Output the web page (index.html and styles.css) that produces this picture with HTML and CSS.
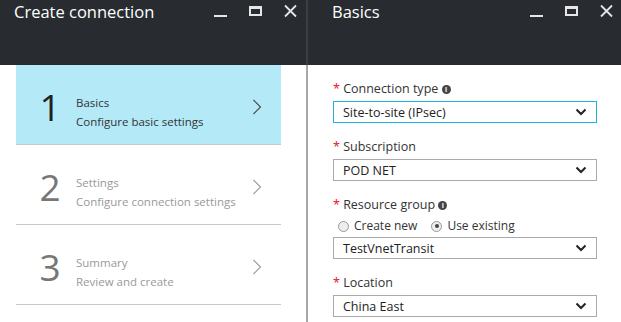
FILE: index.html
```html
<!doctype html>
<html lang="en">
<head>
	<meta charset="UTF-8">
	<title>Create connection</title>
	<link rel="stylesheet" href="styles.css">
</head>
<body>
	<div class="blade left">
		<div class="head">
			<h1>Create connection</h1>
			<div class="ctrls">
				<svg width="13" height="14" viewBox="0 0 13 14"><rect x="0" y="11" width="13" height="2" fill="#e6e6e6"/></svg>
				<svg width="13" height="14" viewBox="0 0 13 14"><path d="M0 2h13v10H0z M2 5v5h9V5z" fill="#e6e6e6" fill-rule="evenodd"/></svg>
				<svg width="13" height="14" viewBox="0 0 13 14"><path d="M1 1.5l11 11M12 1.5l-11 11" stroke="#e6e6e6" stroke-width="1.8"/></svg>
			</div>
		</div>
		<ul class="steps">
			<li class="step on">
				<span class="num">1</span>
				<div class="txt"><p>Basics</p><p>Configure basic settings</p></div>
				<svg class="arr" width="10" height="16" viewBox="0 0 10 16"><path d="M1.5 1l7 7-7 7" fill="none" stroke="#444" stroke-width="1.1"/></svg>
			</li>
			<li class="step">
				<span class="num">2</span>
				<div class="txt"><p>Settings</p><p>Configure connection settings</p></div>
				<svg class="arr" width="10" height="16" viewBox="0 0 10 16"><path d="M1.5 1l7 7-7 7" fill="none" stroke="#999" stroke-width="1.1"/></svg>
			</li>
			<li class="step">
				<span class="num">3</span>
				<div class="txt"><p>Summary</p><p>Review and create</p></div>
				<svg class="arr" width="10" height="16" viewBox="0 0 10 16"><path d="M1.5 1l7 7-7 7" fill="none" stroke="#999" stroke-width="1.1"/></svg>
			</li>
		</ul>
	</div>
	<div class="split"></div>
	<div class="blade right">
		<div class="head">
			<h1>Basics</h1>
			<div class="ctrls">
				<svg width="13" height="14" viewBox="0 0 13 14"><rect x="0" y="11" width="13" height="2" fill="#e6e6e6"/></svg>
				<svg width="13" height="14" viewBox="0 0 13 14"><path d="M0 2h13v10H0z M2 5v5h9V5z" fill="#e6e6e6" fill-rule="evenodd"/></svg>
				<svg width="13" height="14" viewBox="0 0 13 14"><path d="M1 1.5l11 11M12 1.5l-11 11" stroke="#e6e6e6" stroke-width="1.8"/></svg>
			</div>
		</div>
		<div class="form">
			<div class="field">
				<label><b>*</b> Connection type <i class="info">i</i></label>
				<div class="sel focus"><span>Site-to-site (IPsec)</span><svg width="12" height="8" viewBox="0 0 12 8"><path d="M1.5 1.5l4.5 4.5 4.5-4.5" fill="none" stroke="#222" stroke-width="2"/></svg></div>
			</div>
			<div class="field">
				<label><b>*</b> Subscription</label>
				<div class="sel"><span>POD NET</span><svg width="12" height="8" viewBox="0 0 12 8"><path d="M1.5 1.5l4.5 4.5 4.5-4.5" fill="none" stroke="#222" stroke-width="2"/></svg></div>
			</div>
			<div class="field">
				<label><b>*</b> Resource group <i class="info">i</i></label>
				<div class="radios">
					<span class="radio"><i></i>Create new</span>
					<span class="radio checked"><i></i>Use existing</span>
				</div>
				<div class="sel"><span>TestVnetTransit</span><svg width="12" height="8" viewBox="0 0 12 8"><path d="M1.5 1.5l4.5 4.5 4.5-4.5" fill="none" stroke="#222" stroke-width="2"/></svg></div>
			</div>
			<div class="field">
				<label><b>*</b> Location</label>
				<div class="sel"><span>China East</span><svg width="12" height="8" viewBox="0 0 12 8"><path d="M1.5 1.5l4.5 4.5 4.5-4.5" fill="none" stroke="#222" stroke-width="2"/></svg></div>
			</div>
		</div>
	</div>
</body>
</html>
```

FILE: styles.css
```css
html, body {
	margin: 0;
	padding: 0;
	height: 100%;
	overflow: hidden;
	font-family: "Open Sans", "Noto Sans", sans-serif;
	background: #fff;
}
body {
	display: flex;
}
p, h1, ul, li {
	margin: 0;
	padding: 0;
}
ul {
	list-style: none;
}
.blade {
	display: flex;
	flex-direction: column;
}
.left {
	width: 306px;
}
.right {
	flex: 1;
}
.split {
	width: 2px;
	background: #a8a8a8;
	box-shadow: inset 0 65px 0 #3b3f44;
}
.head {
	height: 65px;
	flex-shrink: 0;
	background: #282c31;
	display: flex;
	align-items: flex-start;
	justify-content: space-between;
	color: #fff;
}
.head h1 {
	font-weight: normal;
	font-size: 16.5px;
	line-height: 24px;
}
.left .head h1 {
	padding-left: 14px;
}
.right .head h1 {
	padding-left: 24px;
}
.ctrls {
	display: flex;
	gap: 22px;
	padding-top: 4px;
}
.left .ctrls {
	padding-right: 9px;
}
.right .ctrls {
	padding-right: 8px;
}
.steps {
	margin: 0 25px 0 16px;
}
.step {
	height: 80px;
	box-sizing: border-box;
	border-bottom: 1px solid #c8c8c8;
	display: flex;
	align-items: center;
	padding-top: 4px;
	color: #999;
}
.step.on {
	background: #b4eaf8;
	color: #333;
}
.num {
	width: 36px;
	margin: 0 8px 0 16px;
	text-align: center;
	font-size: 37px;
	line-height: 40px;
	color: #777;
}
.step.on .num {
	color: #222;
}
.txt {
	flex: 1;
	font-size: 11.5px;
	line-height: 19px;
	padding-top: 10px;
}
.arr {
	margin-right: 19px;
}
.form {
	padding: 14px 24px 0 25px;
}
.field {
	margin-bottom: 14px;
}
label {
	display: block;
	font-size: 12.5px;
	line-height: 20px;
	color: #333;
	margin-bottom: 2px;
}
label b {
	color: #e81123;
	font-weight: normal;
}
.info {
	display: inline-block;
	width: 9px;
	height: 9px;
	border-radius: 50%;
	background: #444;
	color: #fff;
	font-size: 7px;
	line-height: 9px;
	text-align: center;
	font-style: normal;
	font-weight: bold;
	vertical-align: 1px;
}
.sel {
	height: 20px;
	border: 1px solid #aaa;
	display: flex;
	align-items: center;
	justify-content: space-between;
	padding: 0 9px;
	font-size: 12.5px;
	color: #222;
}
.sel.focus {
	border-color: #1ab1e3;
}
.radios {
	display: flex;
	gap: 14px;
	font-size: 12px;
	color: #333;
	line-height: 18px;
	margin: 0 0 2px 5px;
}
.radio {
	display: flex;
	align-items: center;
}
.radio i {
	width: 9px;
	height: 9px;
	border: 1px solid #999;
	border-radius: 50%;
	background: #eee;
	margin-right: 5px;
	display: flex;
	align-items: center;
	justify-content: center;
}
.radio.checked i:after {
	content: '';
	width: 4px;
	height: 4px;
	border-radius: 50%;
	background: #444;
}
```
